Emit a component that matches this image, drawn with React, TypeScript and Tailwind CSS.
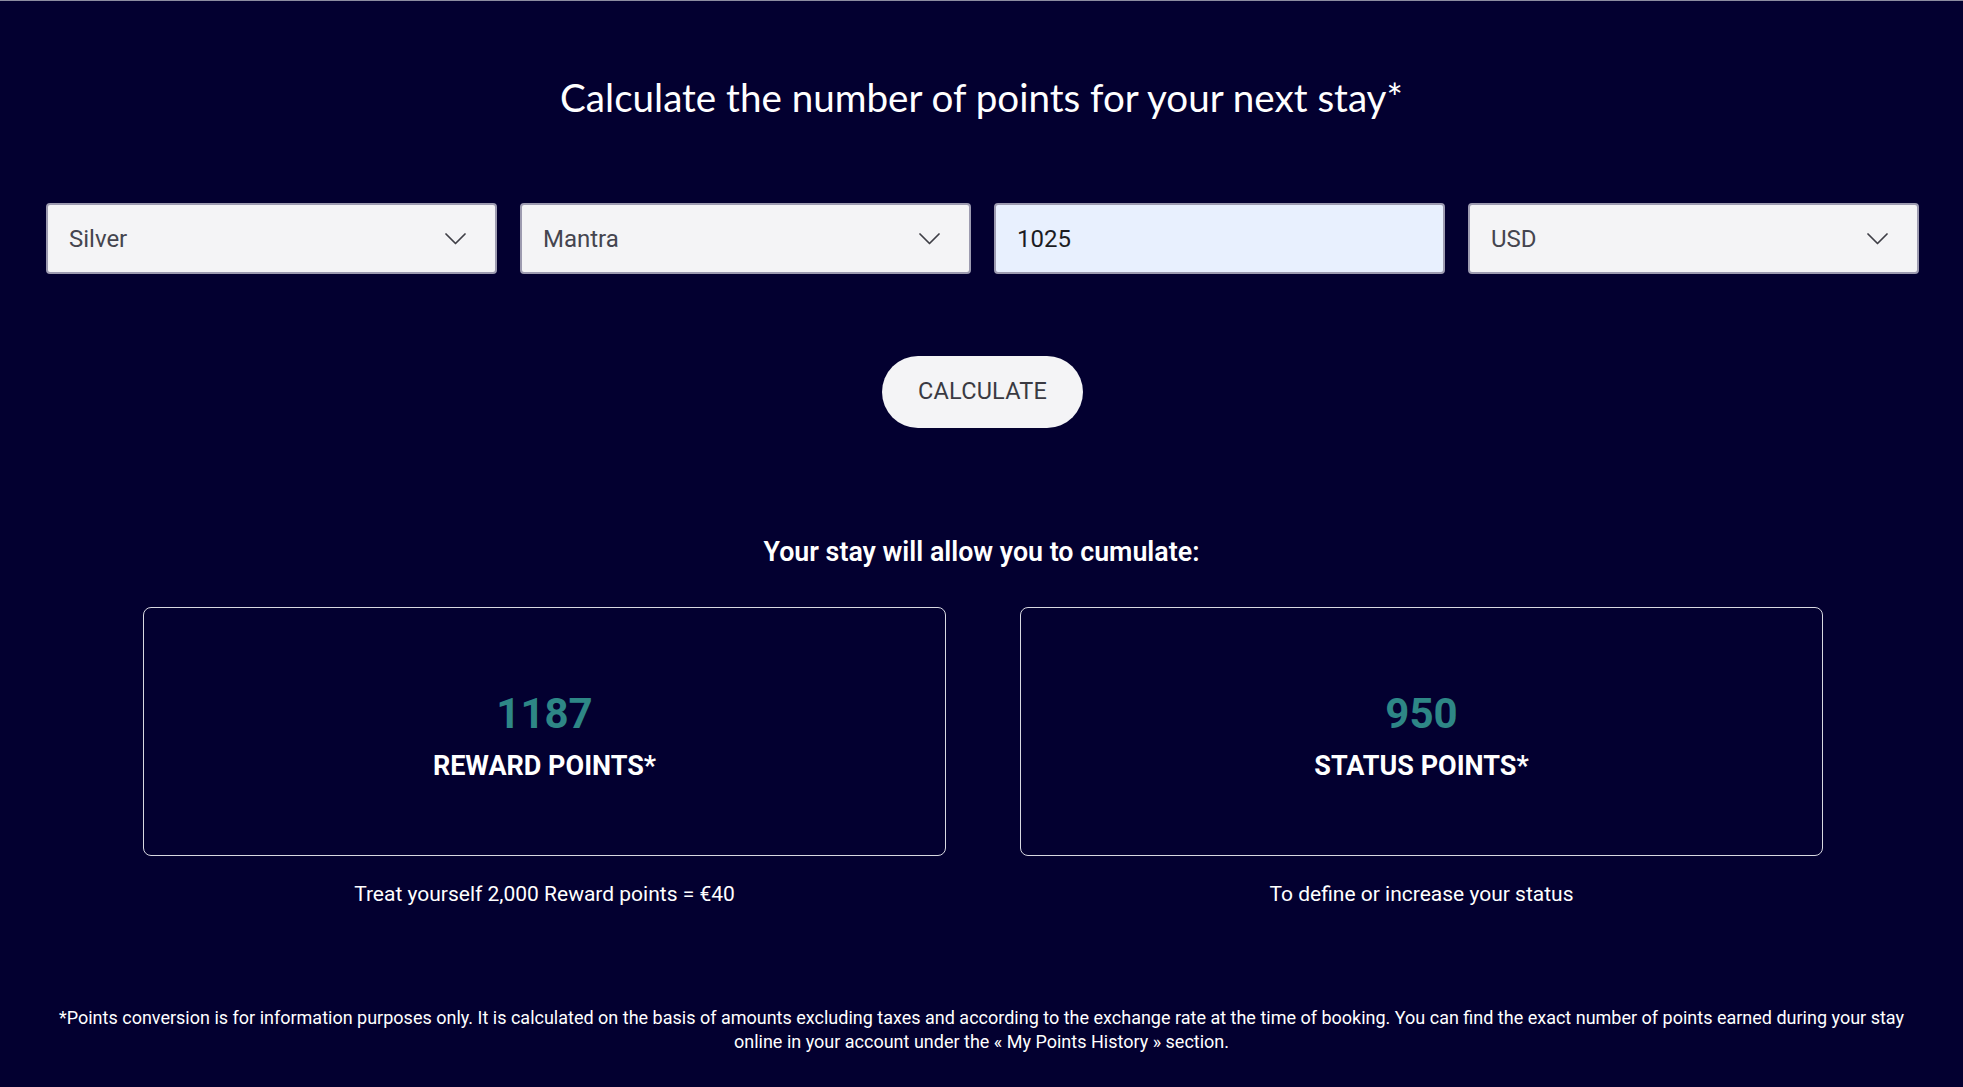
import React from "react";

function Chevron() {
  return (
    <svg width="21" height="12" viewBox="0 0 21 12" fill="none" className="shrink-0">
      <polyline points="1,1 10.5,10.5 20,1" stroke="#3f3f46" strokeWidth="1.7" strokeLinecap="round" strokeLinejoin="round" />
    </svg>
  );
}

function SelectBox({ value }: { value: string }) {
  return (
    <div className="h-[71px] rounded-[4px] border-2 border-[#9d9bb0] bg-[#f4f4f6] flex items-center justify-between pl-[21px] pr-[29px]">
      <span className="text-[24px] text-[#45454f]">{value}</span>
      <Chevron />
    </div>
  );
}

function Card({ value, label, note }: { value: string; label: string; note: string }) {
  return (
    <div className="flex flex-col items-center">
      <div className="w-full h-[249px] rounded-[8px] border border-[#d8d8e0] flex flex-col items-center justify-center pt-[8px]">
        <div className="text-[42px] leading-[50px] font-bold text-[#2e8786]">{value}</div>
        <div className="mt-[11px] text-[27px] leading-[32px] font-bold text-white">{label}</div>
      </div>
      <div className="mt-[25px] text-[21px] leading-[26px] text-white">{note}</div>
    </div>
  );
}

export default function App() {
  return (
    <div
      className="w-full min-h-[1087px] bg-[#030030] border-t border-[#8c8ca0] flex flex-col items-center"
      style={{ fontFamily: "Roboto, 'Liberation Sans', sans-serif" }}
    >
      <h1
        className="mt-[72px] text-[38.6px] leading-[48px] text-white"
        style={{ fontFamily: "Lato, 'Liberation Sans', sans-serif" }}
      >
        Calculate the number of points for your next stay*
      </h1>

      <div className="mt-[82px] w-full pl-[46px] pr-[44px] grid grid-cols-4 gap-[23px]">
        <SelectBox value="Silver" />
        <SelectBox value="Mantra" />
        <div className="h-[71px] rounded-[4px] border-2 border-[#9d9bb0] bg-[#e8f0fe] flex items-center pl-[21px]">
          <span className="text-[24px] text-[#1c1c22]">1025</span>
        </div>
        <SelectBox value="USD" />
      </div>

      <button className="mt-[82px] ml-[2px] w-[201px] h-[72px] rounded-full bg-[#f4f4f6] text-[23.5px] text-[#3a3a42] tracking-[0.2px]">
        CALCULATE
      </button>

      <div className="mt-[108px] text-[26.8px] leading-[32px] font-semibold text-white">
        Your stay will allow you to cumulate:
      </div>

      <div className="mt-[39px] ml-[3px] w-[1680px] grid grid-cols-2 gap-[74px]">
        <Card value="1187" label="REWARD POINTS*" note="Treat yourself 2,000 Reward points = €40" />
        <Card value="950" label="STATUS POINTS*" note="To define or increase your status" />
      </div>

      <p className="mt-[99px] px-[56px] text-center text-[18px] leading-[24px] text-white">
        *Points conversion is for information purposes only. It is calculated on the basis of amounts excluding taxes and according to the exchange rate at the time of booking. You can find the exact number of points earned during your stay online in your account under the « My Points History » section.
      </p>
    </div>
  );
}
